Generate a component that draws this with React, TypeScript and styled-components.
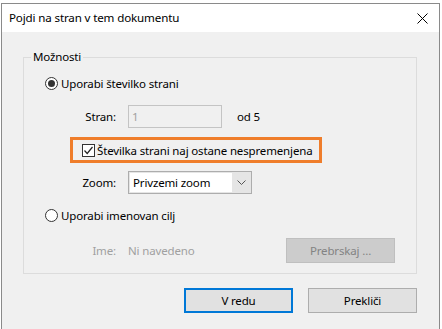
import * as React from 'react';
import styled, { createGlobalStyle } from 'styled-components';

const GlobalStyle = createGlobalStyle`
    html, body {
        margin: 0;
        padding: 0;
        background: #ffffff;
        font-family: "Noto Sans", "Segoe UI", sans-serif;
        font-size: 11.5px;
        letter-spacing: -0.15px;
        color: #000;
    }
    * {
        box-sizing: border-box;
        white-space: nowrap;
    }
`;

const Page = styled.div`
    padding: 3px 0 0 1px;
    height: 329px;
    overflow: hidden;
`;

const Dialog = styled.section`
    width: 439px;
    height: 330px;
    border: 1px solid #8a8a8a;
    background: #f0f0f0;
    display: flex;
    flex-direction: column;
`;

const TitleBar = styled.div`
    height: 28px;
    background: #ffffff;
    display: flex;
    align-items: center;
    justify-content: space-between;
    padding: 0 11px 0 7px;
`;

const Title = styled.span`
    font-size: 11.6px;
    padding-bottom: 1px;
`;

const Body = styled.div`
    padding: 25px 0 0 21px;
    display: flex;
    flex-direction: column;
`;

const GroupBox = styled.div`
    position: relative;
    width: 394px;
    border: 1px solid #dcdcdc;
    padding: 17px 21px 10px 21px;
    display: flex;
    flex-direction: column;
`;

const Legend = styled.span`
    position: absolute;
    top: -9px;
    left: 7px;
    padding: 0 2px;
    background: #f0f0f0;
    line-height: 16px;
`;

const OptionRow = styled.label<{ $gap: number }>`
    display: flex;
    align-items: center;
    height: 16px;
    margin-top: ${p => p.$gap}px;
    gap: 3px;
`;

const Radio = styled.span<{ $checked?: boolean }>`
    width: 13px;
    height: 13px;
    border: 1px solid #333;
    border-radius: 50%;
    background: #fff;
    display: flex;
    align-items: center;
    justify-content: center;
    &::after {
        content: '';
        display: ${p => (p.$checked ? 'block' : 'none')};
        width: 7px;
        height: 7px;
        border-radius: 50%;
        background: #333;
    }
`;

const FieldRow = styled.div<{ $gap: number; $h: number }>`
    display: flex;
    align-items: center;
    height: ${p => p.$h}px;
    margin-top: ${p => p.$gap}px;
    padding-left: 21px;
`;

const Label = styled.span<{ $disabled?: boolean }>`
    width: 50px;
    text-align: right;
    margin-right: 12px;
    color: ${p => (p.$disabled ? '#a0a0a0' : '#000')};
`;

const PageInput = styled.div`
    width: 94px;
    height: 23px;
    border: 1px solid #c4c4c4;
    background: #f0f0f0;
    color: #a0a0a0;
    padding-left: 3px;
    line-height: 21px;
`;

const Of = styled.span`
    margin-left: 15px;
`;

const Highlight = styled.div`
    margin: 9px 0 0 25px;
    width: 252px;
    height: 26px;
    border: 3px solid #ef7d2b;
    display: flex;
    align-items: center;
    padding-left: 9px;
    gap: 2px;
`;

const Check = styled.span`
    width: 13px;
    height: 13px;
    border: 1px solid #333;
    background: #fff;
    display: flex;
    align-items: center;
    justify-content: center;
`;

const Select = styled.div`
    width: 124px;
    height: 23px;
    border: 1px solid #adadad;
    display: flex;
    background: #e5e5e5;
`;

const SelectValue = styled.span`
    flex: 1;
    background: #fff;
    margin: 1px 0 1px 1px;
    padding-left: 3px;
    line-height: 19px;
`;

const Chevron = styled.span`
    width: 19px;
    display: flex;
    align-items: center;
    justify-content: center;
`;

const Muted = styled.span`
    color: #a0a0a0;
`;

const Button = styled.div<{ $default?: boolean; $disabled?: boolean }>`
    width: 109px;
    height: 25px;
    border: ${p => (p.$default ? '2px solid #0078d7' : p.$disabled ? '1px solid #bfbfbf' : '1px solid #adadad')};
    background: ${p => (p.$disabled ? '#cccccc' : '#e1e1e1')};
    color: ${p => (p.$disabled ? '#838383' : '#000')};
    display: flex;
    align-items: center;
    justify-content: center;
`;

const Browse = styled(Button)`
    margin-left: auto;
`;

const ButtonRow = styled.div`
    display: flex;
    gap: 15px;
    justify-content: flex-end;
    margin-top: 14px;
    width: 394px;
`;

function App() {
    return (
        <Page>
            <GlobalStyle />
            <Dialog>
                <TitleBar>
                    <Title>Pojdi na stran v tem dokumentu</Title>
                    <svg width="11" height="11" viewBox="0 0 11 11">
                        <path d="M0.5 0.5 L10.5 10.5 M10.5 0.5 L0.5 10.5" stroke="#000" strokeWidth="1" />
                    </svg>
                </TitleBar>
                <Body>
                    <GroupBox>
                        <Legend>Možnosti</Legend>
                        <OptionRow $gap={0}>
                            <Radio $checked />
                            Uporabi številko strani
                        </OptionRow>
                        <FieldRow $gap={14} $h={23}>
                            <Label>Stran:</Label>
                            <PageInput>1</PageInput>
                            <Of>od 5</Of>
                        </FieldRow>
                        <Highlight>
                            <Check>
                                <svg width="11" height="11" viewBox="0 0 11 11">
                                    <path d="M1.5 5.5 L4.2 8.5 L9.5 2" stroke="#222" strokeWidth="1.2" fill="none" />
                                </svg>
                            </Check>
                            Številka strani naj ostane nespremenjena
                        </Highlight>
                        <FieldRow $gap={8} $h={23}>
                            <Label>Zoom:</Label>
                            <Select>
                                <SelectValue>Privzemi zoom</SelectValue>
                                <Chevron>
                                    <svg width="9" height="6" viewBox="0 0 9 6">
                                        <path d="M0.5 0.5 L4.5 4.5 L8.5 0.5" stroke="#555" fill="none" />
                                    </svg>
                                </Chevron>
                            </Select>
                        </FieldRow>
                        <OptionRow $gap={13}>
                            <Radio />
                            Uporabi imenovan cilj
                        </OptionRow>
                        <FieldRow $gap={15} $h={25}>
                            <Label $disabled>Ime:</Label>
                            <Muted>Ni navedeno</Muted>
                            <Browse $disabled>Prebrskaj ...</Browse>
                        </FieldRow>
                    </GroupBox>
                    <ButtonRow>
                        <Button $default>V redu</Button>
                        <Button>Prekliči</Button>
                    </ButtonRow>
                </Body>
            </Dialog>
        </Page>
    );
}

export default App;
